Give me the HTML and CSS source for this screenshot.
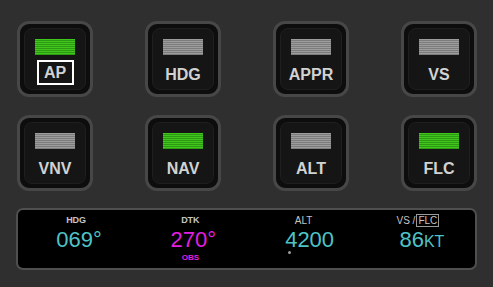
FILE: index.html
```html
<!DOCTYPE html>
<html>
<head>
<meta charset="utf-8">
<link rel="stylesheet" href="styles.css">
</head>
<body>
<div class="panel">
  <div class="keys">
    <div class="key"><div class="inner"><div class="lamp on"></div><div class="label boxed">AP</div></div></div>
    <div class="key"><div class="inner"><div class="lamp"></div><div class="label">HDG</div></div></div>
    <div class="key"><div class="inner"><div class="lamp"></div><div class="label">APPR</div></div></div>
    <div class="key"><div class="inner"><div class="lamp"></div><div class="label">VS</div></div></div>
    <div class="key"><div class="inner"><div class="lamp"></div><div class="label">VNV</div></div></div>
    <div class="key"><div class="inner"><div class="lamp on"></div><div class="label">NAV</div></div></div>
    <div class="key"><div class="inner"><div class="lamp"></div><div class="label">ALT</div></div></div>
    <div class="key"><div class="inner"><div class="lamp on"></div><div class="label">FLC</div></div></div>
  </div>
  <div class="display">
    <div class="cell">
      <div class="cap bold">HDG</div>
      <div class="val cyan">069°</div>
    </div>
    <div class="cell">
      <div class="cap bold">DTK</div>
      <div class="val magenta">270°</div>
      <div class="sub magenta">OBS</div>
    </div>
    <div class="cell">
      <div class="cap">ALT</div>
      <div class="val cyan alt"><span class="altnum">4200<span class="dot"></span></span></div>
    </div>
    <div class="cell">
      <div class="cap">VS /<span class="flc">FLC</span></div>
      <div class="val cyan">86<span class="unit">KT</span></div>
    </div>
  </div>
</div>
</body>
</html>
```

FILE: styles.css
```css
html, body {
  margin: 0;
  padding: 0;
  background: #2f2f2f;
  width: 493px;
  height: 287px;
  overflow: hidden;
}

.panel {
  padding: 21px 0 0 16px;
}

.keys {
  display: grid;
  grid-template-columns: repeat(4, 76px);
  column-gap: 52px;
  row-gap: 18px;
  margin-left: 1px;
}

.key {
  width: 76px;
  height: 76px;
  box-sizing: border-box;
  border: 3px solid #474747;
  border-radius: 12px;
  background: #0d0d0d;
  padding: 4px;
}

.inner {
  box-sizing: border-box;
  height: 100%;
  border-radius: 8px;
  background: #151515;
  border: 1px solid #1f1f1f;
  display: flex;
  flex-direction: column;
  align-items: center;
  padding-top: 10px;
}

.lamp {
  width: 40px;
  height: 16px;
  background: repeating-linear-gradient(to bottom, #9d9d9d 0px, #9d9d9d 1px, #7c7c7c 1px, #7c7c7c 2px);
}

.lamp.on {
  background: repeating-linear-gradient(to bottom, #42c51c 0px, #42c51c 1px, #2b9a12 1px, #2b9a12 2px);
}

.label {
  margin-top: 5px;
  box-sizing: border-box;
  height: 25px;
  width: 37px;
  border: 2px solid transparent;
  text-align: center;
  font-family: "Liberation Sans", Arial, sans-serif;
  font-weight: bold;
  font-size: 16px;
  line-height: 23px;
  color: #d2d2d2;
  white-space: nowrap;
  display: flex;
  justify-content: center;
}

.label:not(.boxed) {
  padding-top: 1px;
}

.label.boxed {
  border-color: #ffffff;
  line-height: 21px;
}

.display {
  margin-top: 17px;
  width: 461px;
  height: 62px;
  box-sizing: border-box;
  border: 2px solid #4f4f4f;
  border-radius: 7px;
  background: #000;
  display: grid;
  grid-template-columns: repeat(4, 1fr);
  padding-top: 5px;
  font-family: "Liberation Sans", Arial, sans-serif;
}

.cell {
  display: flex;
  flex-direction: column;
  align-items: center;
}

.cap {
  font-size: 10px;
  line-height: 11px;
  height: 11px;
  color: #c4c4c4;
  display: flex;
  align-items: center;
}

.cap.bold {
  font-weight: bold;
  font-size: 9px;
  margin-left: 2px;
}

.flc {
  border: 1px solid #9a9a9a;
  padding: 0 1px;
  line-height: 11px;
  margin-left: 1px;
}

.val {
  font-size: 22px;
  line-height: 24px;
  margin-top: 2px;
  padding-left: 8px;
}

.val.alt {
  padding-left: 12px;
}

.cyan { color: #4ec3c6; }
.magenta { color: #e21fe2; }

.altnum {
  position: relative;
}

.dot {
  position: absolute;
  left: 3px;
  bottom: -2px;
  width: 3px;
  height: 3px;
  border-radius: 50%;
  background: #9c9c9c;
}

.unit {
  font-size: 16px;
}

.sub {
  font-size: 8px;
  font-weight: bold;
  line-height: 9px;
  margin-top: 1px;
  padding-left: 2px;
}
```
